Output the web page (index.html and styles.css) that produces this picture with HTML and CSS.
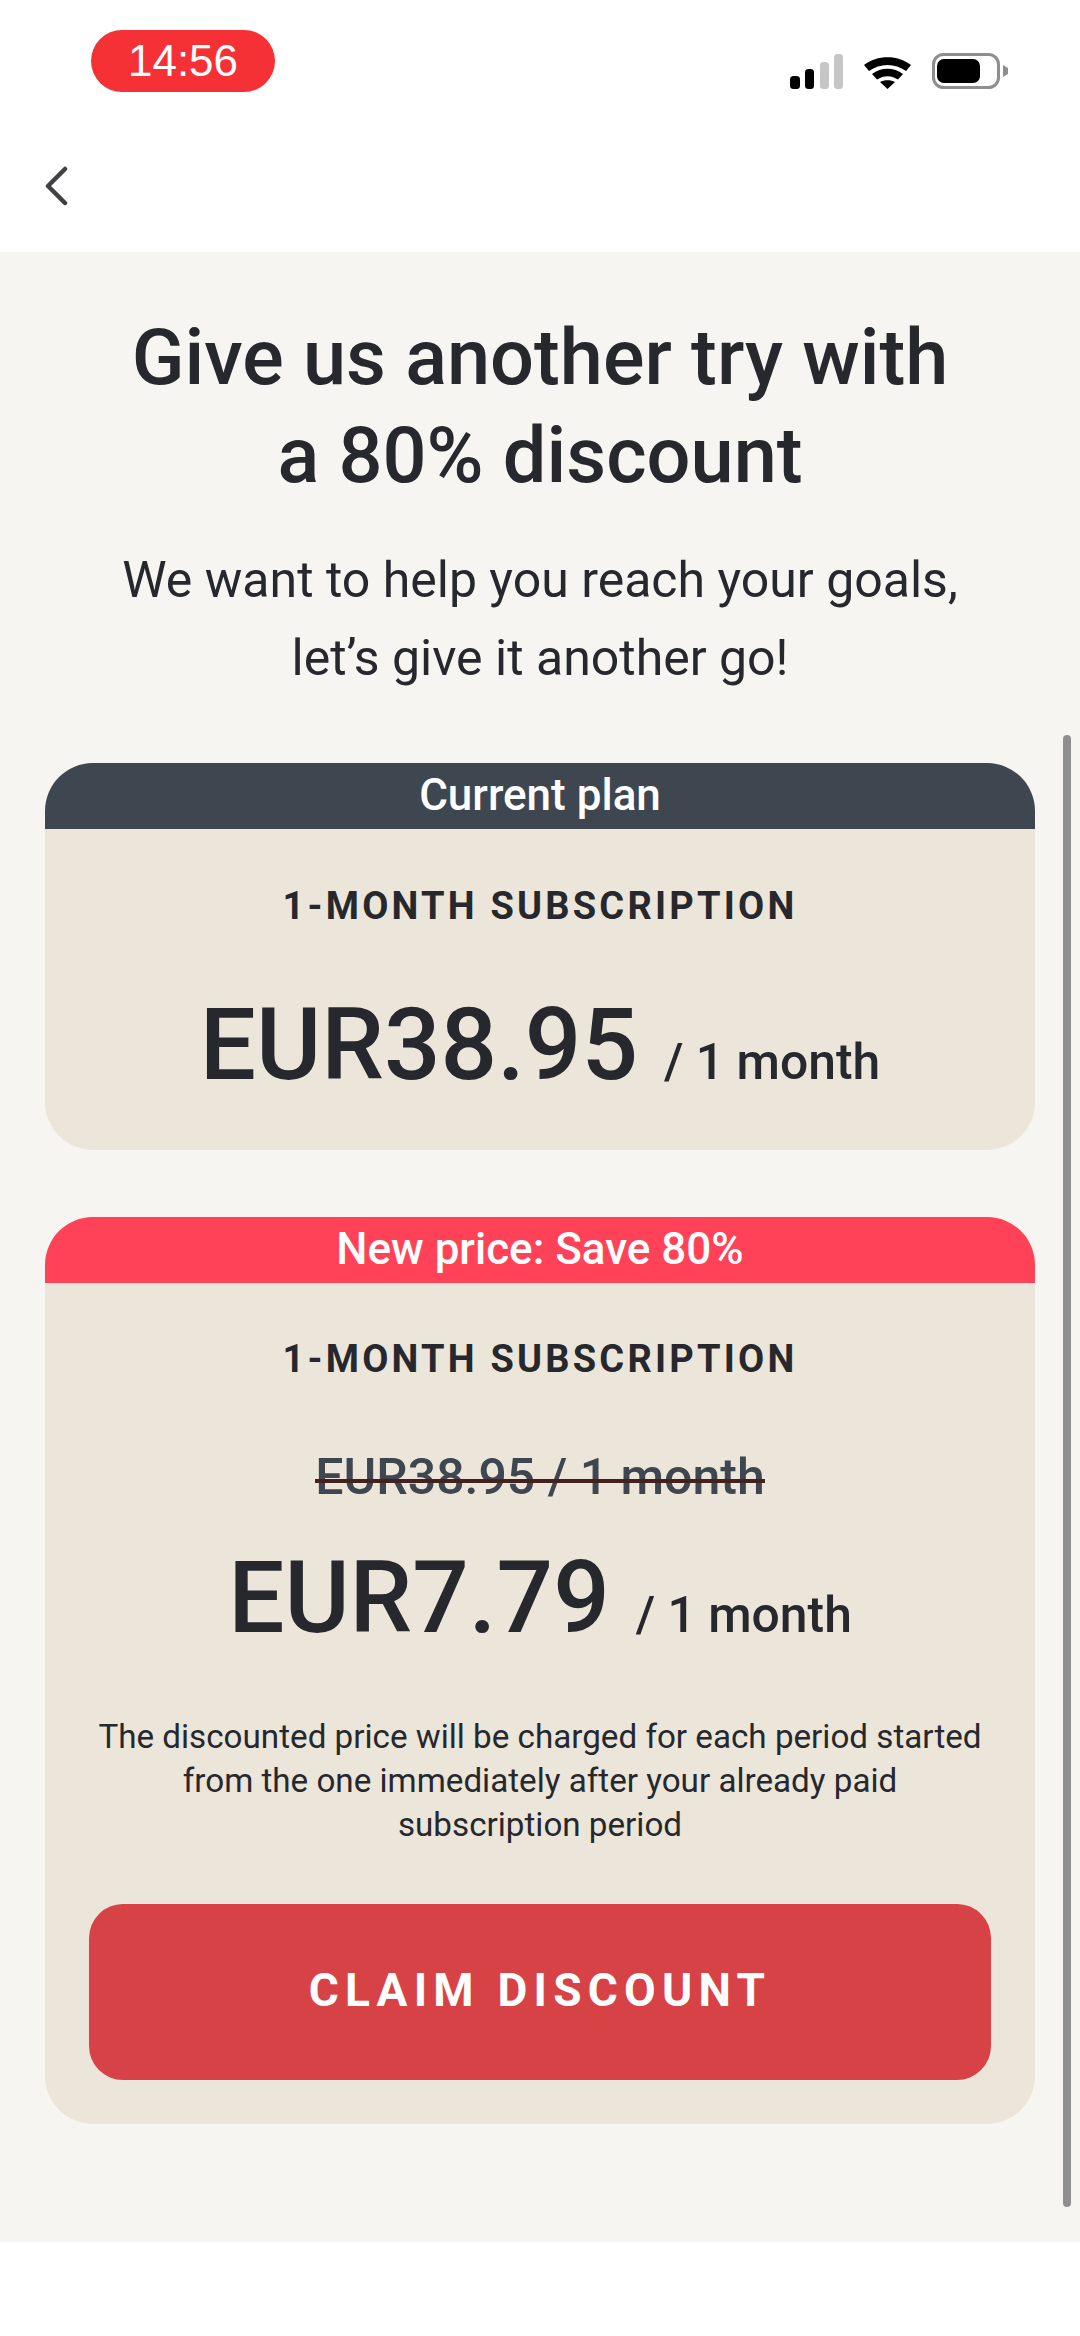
FILE: index.html
```html
<!DOCTYPE html>
<html lang="en">
<head>
	<meta charset="UTF-8">
	<title>Discount offer</title>
	<link rel="stylesheet" href="styles.css">
</head>
<body>
	<header class="top">
		<div class="status">
			<span class="clock">14:56</span>
			<div class="status-icons">
				<svg class="signal" width="53" height="35" viewBox="0 0 53 35">
					<rect x="0" y="22" width="10" height="13" rx="3.5" fill="#000"/>
					<rect x="15" y="15" width="9" height="20" rx="3.5" fill="#000"/>
					<rect x="30" y="8" width="9" height="27" rx="3.5" fill="#c6c6c6"/>
					<rect x="44" y="0" width="9" height="35" rx="3.5" fill="#c6c6c6"/>
				</svg>
				<svg class="wifi" width="47" height="32" viewBox="0 0 47 32">
					<path d="M0 8 C13 -2.500 34 -2.500 47 8 L42 14 C31 6 16 6 5 14 Z" fill="#000"/>
					<path d="M8 17 C17 10 30 10 39 17 L34 22.500 C27 18 20 18 13 22.500 Z" fill="#000"/>
					<path d="M16 25 C20 22.500 27 22.500 31 25 L23.500 32 Z" fill="#000"/>
				</svg>
				<svg class="battery" width="76" height="36" viewBox="0 0 76 36">
					<rect x="1.500" y="1.500" width="65" height="33" rx="10" fill="#fff" stroke="#8e8e8e" stroke-width="3"/>
					<rect x="5" y="6" width="43" height="24" rx="7" fill="#000"/>
					<path d="M71 12 L76 15 L76 21 L71 24 Z" fill="#8e8e8e"/>
				</svg>
			</div>
		</div>
		<div class="nav">
			<svg width="26" height="40" viewBox="0 0 26 40"><path d="M22 3 L5 20 L22 37" fill="none" stroke="#414144" stroke-width="4.500" stroke-linecap="round" stroke-linejoin="round"/></svg>
		</div>
	</header>

	<main class="content">
		<h1>Give us another try with<br>a 80% discount</h1>
		<p class="lead">We want to help you reach your goals,<br>let’s give it another go!</p>

		<section class="card">
			<div class="card-head head-dark">Current plan</div>
			<div class="card-body">
				<h2>1-MONTH SUBSCRIPTION</h2>
				<div class="price"><span class="amount">EUR38.95</span><span class="period">/ 1 month</span></div>
			</div>
		</section>

		<section class="card card-new">
			<div class="card-head head-red">New price: Save 80%</div>
			<div class="card-body">
				<h2>1-MONTH SUBSCRIPTION</h2>
				<div class="old-price"><span>EUR38.95 / 1 month</span></div>
				<div class="price price-new"><span class="amount">EUR7.79</span><span class="period">/ 1 month</span></div>
				<p class="note">The discounted price will be charged for each period started from the one immediately after your already paid subscription period</p>
				<a class="claim" href="#">CLAIM DISCOUNT</a>
			</div>
		</section>

		<div class="scrollbar"></div>
	</main>
</body>
</html>
```

FILE: styles.css
```css
*{margin: 0;padding: 0;box-sizing: border-box;}
html,body{height: 100%;}
body{width: 1080px;height: 2336px;background: #fff;font-family: Roboto, "Liberation Sans", sans-serif;color: #26282e;overflow: hidden;}

.top{height: 252px;background: #fff;}
.status{display: flex;justify-content: space-between;padding: 30px 72px 0 91px;height: 166px;}
.clock{width: 184px;height: 62px;background: #f53136;border-radius: 31px;color: #fff;font-family: "Liberation Sans", sans-serif;font-size: 44px;line-height: 62px;text-align: center;}
.status-icons{display: flex;align-items: flex-end;gap: 21px;height: 59px;}
.nav{padding-left: 43px;}
.nav svg{display: block;}

.content{position: relative;height: 1990px;background: #f6f5f2;padding: 0 45px;text-align: center;}
h1{font-size: 77.5px;line-height: 98px;font-weight: 500;padding-top: 57px;}
.lead{font-size: 50px;line-height: 78px;margin-top: 36px;}

.card{background: #ebe6d9;border-radius: 48px;overflow: hidden;margin-top: 66px;}
.card-new{height: 907px;margin-top: 67px;}
.card-new .card-body{padding-top: 51px;}
.card-head{height: 66px;color: #fff;font-size: 44px;font-weight: 500;line-height: 64px;}
.head-dark{background: #3e4650;}
.head-red{background: #ff4257;}
.card-body{padding: 52px 44px 0;}
h2{font-size: 38px;line-height: 50px;font-weight: 700;letter-spacing: 3.2px;}

.price{display: flex;justify-content: center;align-items: baseline;gap: 26px;height: 219px;padding-top: 59px;}
.amount{font-size: 99.6px;line-height: 110px;font-weight: 500;}
.period{font-size: 49.8px;font-weight: 500;}
.old-price{margin-top: 63px;font-size: 50px;line-height: 60px;color: #3e4650;font-weight: 500;}
.old-price span{position: relative;display: inline-block;}
.old-price span::after{content: "";position: absolute;left: 0;right: 0;top: 32px;height: 4px;background: #44201f;}
.price-new{height: auto;padding-top: 36px;}
.note{font-size: 33.2px;line-height: 44px;margin-top: 62px;padding: 0 6px;}
.claim{display: block;height: 176px;margin-top: 57px;background: #d64245;border-radius: 34px;color: #fff;font-size: 46px;font-weight: 700;letter-spacing: 6.2px;line-height: 172px;text-decoration: none;}

.scrollbar{position: absolute;left: 1063px;top: 483px;width: 8px;height: 1472px;background: #8f8f8f;border-radius: 4px;}
```
